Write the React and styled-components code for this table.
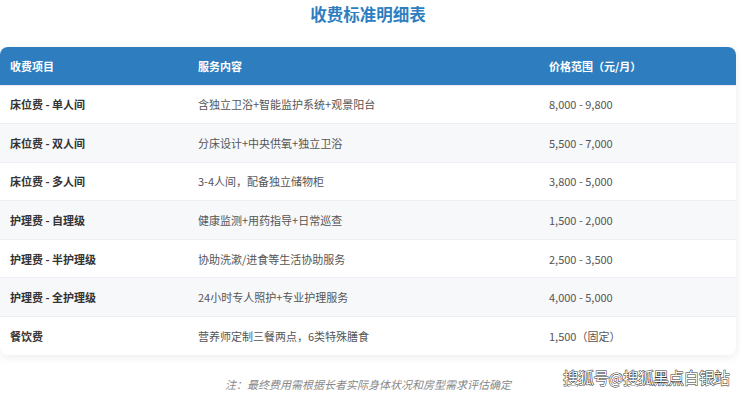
import React from "react";
import styled, { createGlobalStyle } from "styled-components";

const GlobalStyle = createGlobalStyle`
  html, body {
    margin: 0;
    padding: 0;
    background: #ffffff;
    font-family: "Noto Sans CJK SC", "Noto Sans", sans-serif;
  }
`;

const Page = styled.div`
  position: relative;
  width: 740px;
  height: 393px;
  overflow: hidden;
  padding-right: 4px;
  box-sizing: border-box;
`;

const Title = styled.h2`
  margin: 0;
  padding-top: 3px;
  height: 47px;
  box-sizing: border-box;
  text-align: center;
  font-size: 16.5px;
  line-height: 22px;
  font-weight: 700;
  color: #2e7ebf;
`;

const Card = styled.div`
  border-radius: 8px;
  overflow: hidden;
  background: #fff;
  box-shadow: 0 2px 10px rgba(0, 0, 0, 0.08);
`;

const Table = styled.table`
  width: 100%;
  border-collapse: collapse;
  font-size: 11px;
`;

const HeadCell = styled.th`
  background: #2e7ebf;
  color: #fff;
  font-weight: 700;
  text-align: left;
  height: 38px;
  padding: 0 0 0 ${(p) => p.$pad}px;
  box-sizing: border-box;
`;

const Row = styled.tr`
  background: ${(p) => (p.$alt ? "#f7f8fa" : "#ffffff")};
  border-top: 1px solid #eceef2;
`;

const Cell = styled.td`
  height: 38.6px;
  padding: 0 0 0 ${(p) => p.$pad}px;
  box-sizing: border-box;
  color: ${(p) => (p.$strong ? "#333" : "#555")};
  font-weight: ${(p) => (p.$strong ? 700 : 400)};
`;

const Note = styled.p`
  margin: 21px 0 0;
  text-align: center;
  font-size: 11px;
  font-style: italic;
  color: #888;
`;

const Watermark = styled.div`
  position: absolute;
  left: 563px;
  top: 366px;
  font-size: 15.5px;
  letter-spacing: -0.3px;
  color: #fff;
  -webkit-text-stroke: 1px #333;
  paint-order: stroke fill;
  font-weight: 400;
`;

const rows = [
  ["床位费 - 单人间", "含独立卫浴+智能监护系统+观景阳台", "8,000 - 9,800"],
  ["床位费 - 双人间", "分床设计+中央供氧+独立卫浴", "5,500 - 7,000"],
  ["床位费 - 多人间", "3-4人间，配备独立储物柜", "3,800 - 5,000"],
  ["护理费 - 自理级", "健康监测+用药指导+日常巡查", "1,500 - 2,000"],
  ["护理费 - 半护理级", "协助洗漱/进食等生活协助服务", "2,500 - 3,500"],
  ["护理费 - 全护理级", "24小时专人照护+专业护理服务", "4,000 - 5,000"],
  ["餐饮费", "营养师定制三餐两点，6类特殊膳食", "1,500（固定）"],
];

export default function App() {
  return (
    <>
      <GlobalStyle />
      <Page>
        <Title>收费标准明细表</Title>
        <Card>
          <Table>
            <colgroup>
              <col style={{ width: 188 }} />
              <col style={{ width: 351 }} />
              <col />
            </colgroup>
            <thead>
              <tr>
                <HeadCell $pad={10}>收费项目</HeadCell>
                <HeadCell $pad={10}>服务内容</HeadCell>
                <HeadCell $pad={10}>价格范围（元/月）</HeadCell>
              </tr>
            </thead>
            <tbody>
              {rows.map((r, i) => (
                <Row key={i} $alt={i % 2 === 1}>
                  <Cell $pad={10} $strong>
                    {r[0]}
                  </Cell>
                  <Cell $pad={10}>{r[1]}</Cell>
                  <Cell $pad={10}>{r[2]}</Cell>
                </Row>
              ))}
            </tbody>
          </Table>
        </Card>
        <Note>注：最终费用需根据长者实际身体状况和房型需求评估确定</Note>
        <Watermark>搜狐号@搜狐黑点白银站</Watermark>
      </Page>
    </>
  );
}
